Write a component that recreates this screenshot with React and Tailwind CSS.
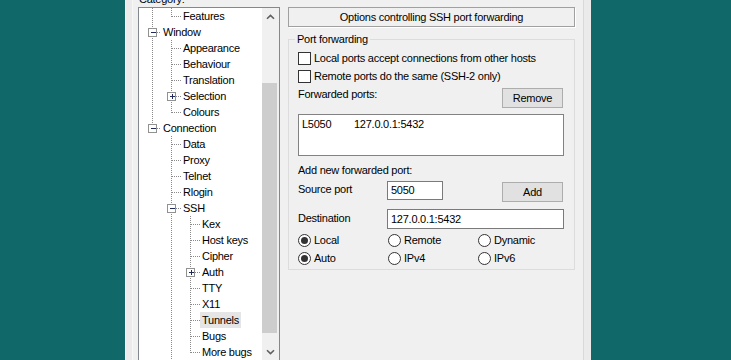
import React from "react";

const LINE_X = [13, 32, 51];
const TEXT_X = [24, 44, 63];

const rows = [
  { label: "Features", level: 1, last: true, cont: [0] },
  { label: "Window", level: 0, box: "-", cont: [] },
  { label: "Appearance", level: 1, cont: [0] },
  { label: "Behaviour", level: 1, cont: [0] },
  { label: "Translation", level: 1, cont: [0] },
  { label: "Selection", level: 1, box: "+", cont: [0] },
  { label: "Colours", level: 1, last: true, cont: [0] },
  { label: "Connection", level: 0, box: "-", last: true, cont: [] },
  { label: "Data", level: 1, cont: [] },
  { label: "Proxy", level: 1, cont: [] },
  { label: "Telnet", level: 1, cont: [] },
  { label: "Rlogin", level: 1, cont: [] },
  { label: "SSH", level: 1, box: "-", cont: [] },
  { label: "Kex", level: 2, cont: [1] },
  { label: "Host keys", level: 2, cont: [1] },
  { label: "Cipher", level: 2, cont: [1] },
  { label: "Auth", level: 2, box: "+", cont: [1] },
  { label: "TTY", level: 2, cont: [1] },
  { label: "X11", level: 2, cont: [1] },
  { label: "Tunnels", level: 2, cont: [1], selected: true },
  { label: "Bugs", level: 2, cont: [1] },
  { label: "More bugs", level: 2, last: true, cont: [1] },
];

function Guides({ row }) {
  const x = LINE_X[row.level];
  const w = TEXT_X[row.level] - 2;
  return (
    <svg width={w} height="16" className="shrink-0" shapeRendering="crispEdges">
      {row.cont.map((l) => (
        <line key={l} x1={LINE_X[l] + 0.5} y1="0" x2={LINE_X[l] + 0.5} y2="16" stroke="#8a8a8a" strokeDasharray="1 1" />
      ))}
      <line x1={x + 0.5} y1="0" x2={x + 0.5} y2={row.last ? 9 : 16} stroke="#8a8a8a" strokeDasharray="1 1" />
      <line x1={x + 1} y1="8.5" x2={w} y2="8.5" stroke="#8a8a8a" strokeDasharray="1 1" />
      {row.box && (
        <g>
          <rect x={x - 3.5} y="4.5" width="8" height="8" fill="#fff" stroke="#919191" />
          <rect x={x - 1} y="8" width="5" height="1" fill="#1f2a5c" />
          {row.box === "+" && <rect x={x + 1} y="6" width="1" height="5" fill="#1f2a5c" />}
        </g>
      )}
    </svg>
  );
}

function Chevron({ down }) {
  return (
    <svg width="9" height="6" viewBox="0 0 9 6">
      <path
        d={down ? "M1 1.2 L4.5 4.6 L8 1.2" : "M1 4.8 L4.5 1.4 L8 4.8"}
        fill="none"
        stroke="#606060"
        strokeWidth="1.6"
      />
    </svg>
  );
}

function CheckBox({ label }) {
  return (
    <div className="flex items-center h-[13px]">
      <span className="w-[13px] h-[13px] border border-[#333] bg-white shrink-0" />
      <span className="ml-[3px] leading-[13px]">{label}</span>
    </div>
  );
}

function Radio({ label, checked, last }) {
  return (
    <div className={`flex items-center h-[13px] ${last ? "" : "w-[90px]"}`}>
      <span className="w-[13px] h-[13px] rounded-full border border-[#333] bg-white shrink-0 flex items-center justify-center">
        {checked && <span className="w-[7px] h-[7px] rounded-full bg-[#333]" />}
      </span>
      <span className="ml-[3px] leading-[13px]">{label}</span>
    </div>
  );
}

function Button({ children, className = "" }) {
  return (
    <div
      className={`w-[61px] h-[20px] border border-[#adadad] bg-[#e1e1e1] flex items-center justify-center leading-[13px] ${className}`}
    >
      {children}
    </div>
  );
}

export default function App() {
  return (
    <div
      className="w-[731px] h-[360px] bg-[#106868] overflow-hidden flex text-[11px] tracking-[-0.25px] text-black"
      style={{ fontFamily: '"Liberation Sans", Arial, sans-serif' }}
    >
      <div className="ml-[125px] w-[466px] h-full flex bg-[#f0f0f0]">
        <div className="w-[8px] h-full bg-[#ebebeb] border-l border-[#f6f6f6] border-r border-r-[#f7f7f7]" />

        <div className="w-[450px] h-full flex">
          {/* category tree */}
          <div className="ml-[5px] w-[142px] shrink-0 flex flex-col -mt-[7px]">
            <div className="h-[13px] leading-[13px] ml-[1px]">Category:</div>
            <div className="mt-[1px] h-[400px] border border-[#828790] bg-white flex">
              <div className="w-[123px] overflow-hidden flex flex-col">
                {rows.map((row) => (
                  <div key={row.label} className="h-[16px] flex items-center whitespace-nowrap">
                    <Guides row={row} />
                    <span className={`leading-[16px] px-[2px] ${row.selected ? "bg-[#e5e5e5]" : ""}`}>
                      {row.label}
                    </span>
                  </div>
                ))}
              </div>
              <div className="w-[17px] bg-[#f0f0f0] flex flex-col">
                <div className="h-[17px] flex items-center justify-center">
                  <Chevron />
                </div>
                <div className="h-[58px]" />
                <div className="h-[250px] bg-[#cdcdcd] mr-[2px]" />
                <div className="h-[10px]" />
                <div className="h-[17px] flex items-center justify-center">
                  <Chevron down />
                </div>
              </div>
            </div>
          </div>

          {/* options panel */}
          <div className="ml-[8px] w-[287px] shrink-0 pt-[7px] flex flex-col">
            <div className="h-[20px] border border-[#a0a0a0] shadow-[1px_1px_0_#ffffff] flex items-center justify-center leading-[13px]">
              Options controlling SSH port forwarding
            </div>

            <fieldset className="mt-[6px] min-w-0 w-[287px] border border-[#dcdcdc] pl-[9px] pr-[10px] pb-[4px] flex flex-col">
              <legend className="-ml-[3px] px-[2px] leading-[13px]">Port forwarding</legend>

              <div className="mt-[6px]">
                <CheckBox label="Local ports accept connections from other hosts" />
              </div>
              <div className="mt-[5px]">
                <CheckBox label="Remote ports do the same (SSH-2 only)" />
              </div>

              <div className="mt-[5px] flex items-start justify-between">
                <span className="leading-[13px]">Forwarded ports:</span>
                <Button className="mr-[1px]">Remove</Button>
              </div>

              <div className="mt-[6px] h-[42px] border border-[#828282] bg-white pl-[3px] pt-[3px] flex leading-[13px]">
                <span className="w-[52px]">L5050</span>
                <span>127.0.0.1:5432</span>
              </div>

              <div className="mt-[8px] leading-[13px]">Add new forwarded port:</div>

              <div className="mt-[4px] flex items-start">
                <span className="w-[89px] mt-[2px] leading-[13px]">Source port</span>
                <div className="w-[56px] h-[19px] border border-[#7a7a7a] bg-white pl-[3px] flex items-center leading-[13px]">
                  5050
                </div>
                <Button className="ml-auto mt-[1px] mr-[1px]">Add</Button>
              </div>

              <div className="mt-[7px] flex items-start">
                <span className="w-[89px] mt-[3px] leading-[13px]">Destination</span>
                <div className="flex-1 h-[20px] border border-[#7a7a7a] bg-white pl-[3px] flex items-center leading-[13px]">
                  127.0.0.1:5432
                </div>
              </div>

              <div className="mt-[5px] flex">
                <Radio label="Local" checked />
                <Radio label="Remote" />
                <Radio label="Dynamic" last />
              </div>
              <div className="mt-[5px] flex">
                <Radio label="Auto" checked />
                <Radio label="IPv4" />
                <Radio label="IPv6" last />
              </div>
            </fieldset>
          </div>
        </div>

        <div className="w-[8px] h-full bg-[#ebebeb] border-l border-[#d9d9d9]" />
      </div>
    </div>
  );
}
